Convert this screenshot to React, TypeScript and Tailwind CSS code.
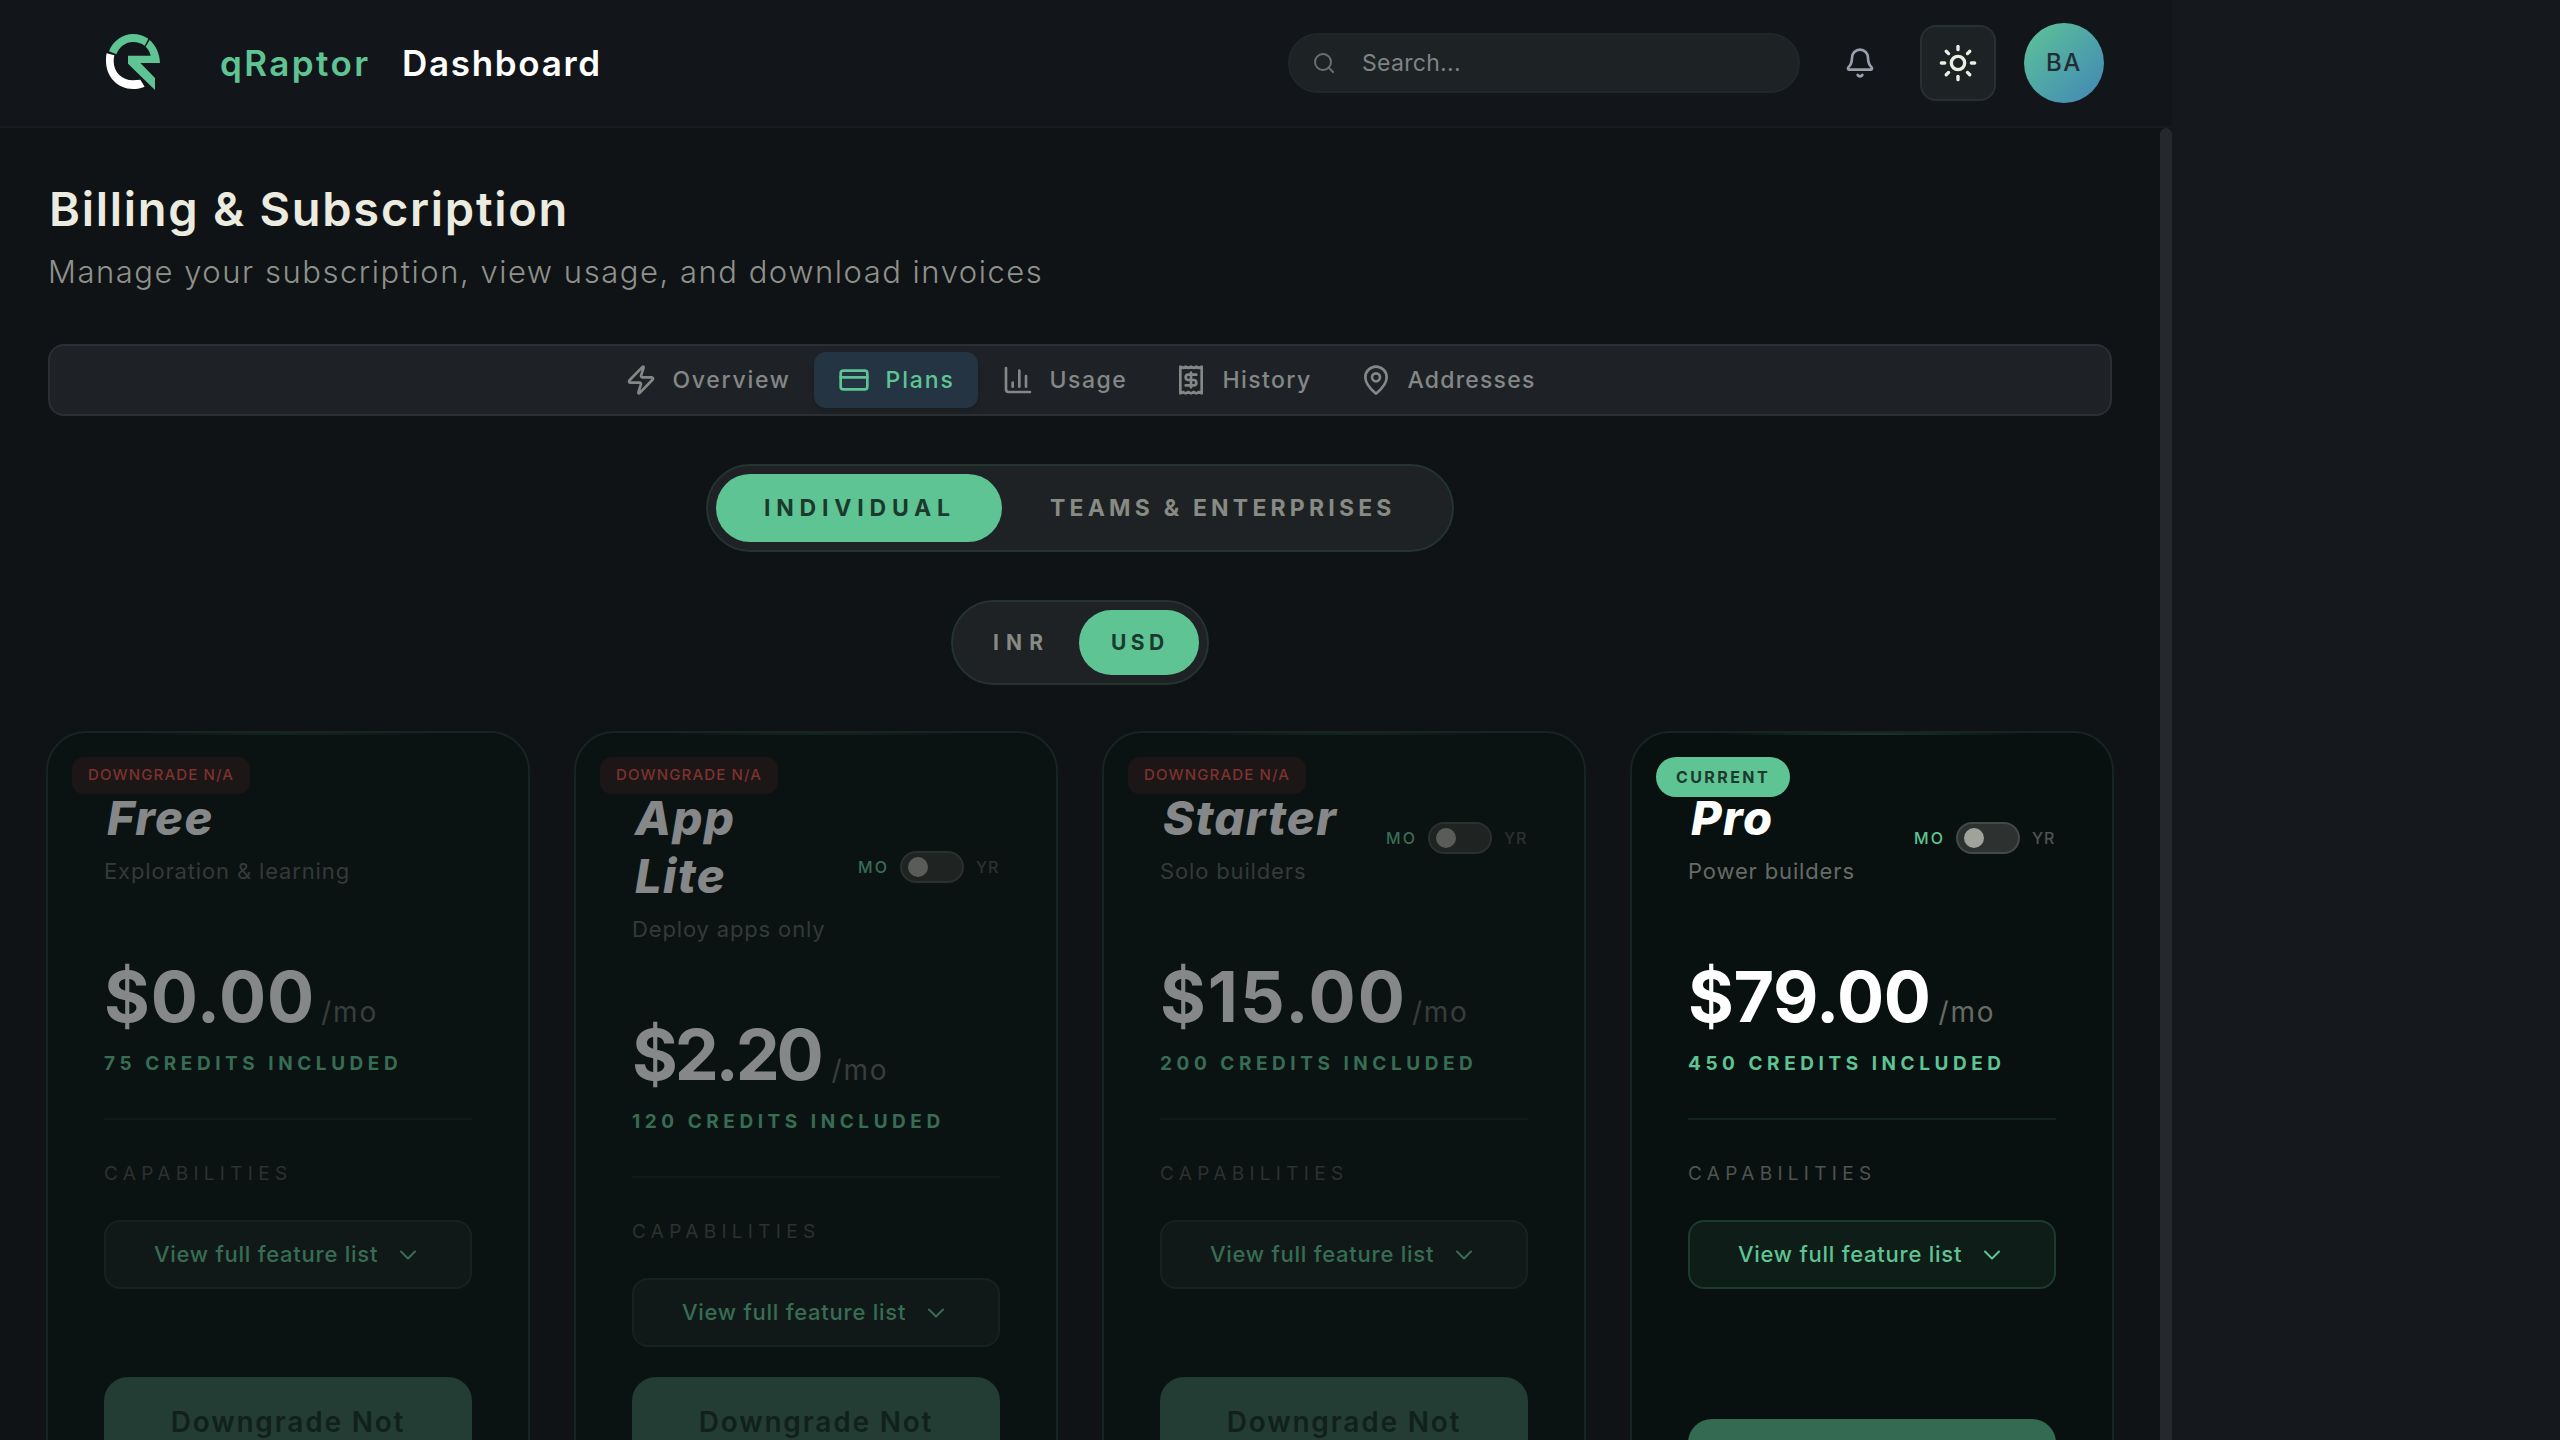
import React, { useState } from 'react';
import { clsx } from 'clsx';
import { Bell, ChartColumn, ChevronDown, CreditCard, MapPin, Receipt, Search, Sun, Zap } from 'lucide-react';

const tabs = [
  { id: 'overview', label: 'Overview', icon: Zap, className: 'w-[213px] tracking-[1.7px]' },
  { id: 'plans', label: 'Plans', icon: CreditCard, className: 'w-[164px] tracking-[1.9px]' },
  { id: 'usage', label: 'Usage', icon: ChartColumn, className: 'w-[173px] tracking-[1.5px]' },
  { id: 'history', label: 'History', icon: Receipt, className: 'w-[185px] tracking-[1.4px]' },
  { id: 'addresses', label: 'Addresses', icon: MapPin, className: 'w-[224px] tracking-[1.2px]' },
];

interface Plan {
  name: string;
  tagline: string;
  price: string;
  credits: number;
  action: string;
  hasToggle: boolean;
  current?: boolean;
  priceSpacing: string;
}

const plans: Plan[] = [
  { name: 'Free', tagline: 'Exploration & learning', price: '$0.00', credits: 75, action: 'Downgrade Not Available', hasToggle: false, priceSpacing: 'tracking-[0.9px] mr-[-2px]' },
  { name: 'App\nLite', tagline: 'Deploy apps only', price: '$2.20', credits: 120, action: 'Downgrade Not Available', hasToggle: true, priceSpacing: 'tracking-[-3.2px] mr-[3px]' },
  { name: 'Starter', tagline: 'Solo builders', price: '$15.00', credits: 200, action: 'Downgrade Not Available', hasToggle: true, priceSpacing: 'tracking-[2px] mr-[-3px]' },
  { name: 'Pro', tagline: 'Power builders', price: '$79.00', credits: 450, action: 'Current Plan', hasToggle: true, current: true, priceSpacing: 'tracking-[-0.4px]' },
];

const Logo = () => (
  <svg viewBox="0 0 216 216" className="w-[72px] h-[72px]">
    <path fill="#5fc494" d="M33 73C45 41 74 21 105 21c17 0 33 5 46 14l-11 21c-10-7-22-11-35-11-22 0-41 14-50 37Z" />
    <path fill="#5fc494" d="M155 39c18 16 30 40 31 69h-59l44 45v36L90 110V86h68c-2-10-7-19-15-27Z" />
    <path fill="#fff" d="M26 79l23 6c-1 5-2 11-2 17 0 33 24 58 58 58l22-2 13 21c-11 5-22 7-35 7-46 0-81-37-81-84 0-8 0-16 2-23Z" />
  </svg>
);

const Header = () => (
  <header className="h-32 shrink-0 flex items-center pl-[98px] pr-[68px] bg-[#12161a] border-b-2 border-[#171b20]">
    <Logo />
    <div className="ml-[50px] flex items-center text-[35px] font-semibold leading-none">
      <span className="w-[182px] text-[#5fc494] tracking-[2.4px]">qRaptor</span>
      <span className="text-white tracking-[1.7px]">Dashboard</span>
    </div>
    <div className="ml-auto flex items-center">
      <div className="w-[512px] h-[60px] flex items-center gap-[26px] px-[22px] rounded-[30px] bg-[#1d2225] border-2 border-[#212629]">
        <Search size={24} strokeWidth={2} className="text-[#6a6e6f]" />
        <span className="text-[23px] text-[#7f8385] tracking-[0.3px]">Search...</span>
      </div>
      <button className="w-[60px] ml-[30px] mr-[30px] flex justify-center text-[#9b9fad]">
        <Bell size={32} strokeWidth={2} />
      </button>
      <button className="w-[76px] h-[76px] flex items-center justify-center rounded-2xl bg-[#1d2225] border-2 border-[#2a2f33] text-[#edeee2]">
        <Sun size={40} strokeWidth={2} />
      </button>
      <div className="w-20 h-20 ml-7 flex items-center justify-center rounded-full bg-linear-135 from-[#5fc494] to-[#4385b5] text-[24px] font-medium tracking-[1.5px] text-[#242c33]">
        BA
      </div>
    </div>
  </header>
);

const TabBar = () => {
  const [active, setActive] = useState('plans');

  return (
    <nav className="mt-12 h-[72px] shrink-0 flex items-center justify-center rounded-2xl bg-[#1e2226] border-2 border-[#2a2f33]">
      {tabs.map(({ id, label, icon: Icon, className }) => (
        <button
          key={id}
          onClick={() => setActive(id)}
          className={clsx(
            'h-14 flex items-center gap-4 pl-6 rounded-xl text-[23px] font-medium',
            className,
            active === id ? 'bg-[#243442] text-[#5fc494] shadow-md' : 'text-[#858787]'
          )}
        >
          <Icon size={32} strokeWidth={2} className="shrink-0" />
          {label}
        </button>
      ))}
    </nav>
  );
};

const AudienceToggle = () => (
  <div className="mt-12 w-[748px] h-[88px] shrink-0 self-center flex p-2 rounded-full bg-[#1e2225] border-2 border-[#24342f] text-[23px] font-bold">
    <button className="w-[286px] pl-12 text-left rounded-full bg-[#5fc494] text-[#1b3a2d] tracking-[5.8px]">INDIVIDUAL</button>
    <button className="pl-12 text-left text-[#888a84] tracking-[4.2px]">TEAMS &amp; ENTERPRISES</button>
  </div>
);

const CurrencyToggle = () => (
  <div className="mt-12 w-[258px] h-[85px] shrink-0 self-center flex p-2 rounded-full bg-[#1e2225] border-2 border-[#24342f] text-[21px] font-bold">
    <button className="w-[118px] pl-8 text-left text-[#888a84] tracking-[7.2px]">INR</button>
    <button className="w-[120px] pl-8 text-left rounded-full bg-[#5fc494] text-[#1b3a2d] tracking-[4.5px]">USD</button>
  </div>
);

const BillingSwitch = ({ current }: { current?: boolean }) => (
  <div className="flex items-center text-[16px] font-medium leading-none">
    <span className={clsx('w-[42px] tracking-[2.2px]', current ? 'text-[#5fc494]' : 'text-[#376d55]')}>MO</span>
    <span className={clsx('w-16 h-8 flex items-center px-1.5 rounded-full border-2', current ? 'bg-[#2d3231] border-[#444947]' : 'bg-[#1f2423] border-[#2b302f]')}>
      <span className={clsx('w-5 h-5 rounded-full', current ? 'bg-[#a0a39a]' : 'bg-[#5a5c5a]')} />
    </span>
    <span className={clsx('w-9 pl-3 tracking-[0.9px]', current ? 'text-[#4f5450]' : 'text-[#2c3131]')}>YR</span>
  </div>
);

const PlanCard = ({ plan }: { plan: Plan }) => {
  const { current } = plan;

  return (
    <div className={clsx('relative w-[484px] h-[836px] shrink-0 flex flex-col p-14 rounded-[40px] border-2 border-[#172421]', current ? 'bg-[#091110]' : 'bg-[#0b1312]')}>
      {/* Top glow */}
      <div className={clsx('absolute top-0 left-20 right-20 h-0.5 bg-linear-to-r from-transparent to-transparent', current ? 'via-[#1a3429]' : 'via-[#15231e]')} />

      {current ? (
        <div className="absolute top-6 left-6 w-[134px] h-10 pl-5 flex items-center rounded-full bg-[#5fc494] text-[16px] font-bold tracking-[2.4px] text-[#1b3a2d]">
          CURRENT
        </div>
      ) : (
        <div className="absolute top-6 left-6 w-[178px] h-[37px] pl-4 flex items-center rounded-xl bg-[#1c1716] text-[15px] font-medium tracking-[1.15px] text-[#7d3230] whitespace-nowrap">
          DOWNGRADE N/A
        </div>
      )}

      <div className="flex items-center justify-between">
        <div>
          <h3 className={clsx('pl-[3px] text-[47px] leading-[58px] font-extrabold italic tracking-[1.4px] whitespace-pre-line', current ? 'text-white' : 'text-[#868789]')}>
            {plan.name}
          </h3>
          <p className={clsx('mt-2 text-[22px] leading-8 tracking-[0.85px]', current ? 'text-[#666b65]' : 'text-[#333a39]')}>{plan.tagline}</p>
        </div>
        {plan.hasToggle && <BillingSwitch current={current} />}
      </div>

      <div className="mt-[74px] h-[72px] flex items-baseline gap-2">
        <span className={clsx('text-[70px] leading-[72px] font-bold', plan.priceSpacing, current ? 'text-white' : 'text-[#868789]')}>{plan.price}</span>
        <span className={clsx('text-[28px] tracking-[1.8px]', current ? 'text-[#666b65]' : 'text-[#383d3d]')}>/mo</span>
      </div>
      <p className={clsx('mt-[17px] text-[19px] leading-7 font-bold tracking-[4.55px] whitespace-nowrap', current ? 'text-[#5fc494]' : 'text-[#376d55]')}>
        {plan.credits} CREDITS INCLUDED
      </p>

      <div className={clsx('mt-10 h-0.5 shrink-0', current ? 'bg-[#12241f]' : 'bg-[#111a19]')} />

      <p className={clsx('mt-10 text-[19px] leading-7 tracking-[5.3px]', current ? 'text-[#4f5450]' : 'text-[#2c3131]')}>CAPABILITIES</p>
      <button
        className={clsx(
          'mt-8 h-[69px] shrink-0 flex items-center justify-center rounded-2xl border-2 text-[22px] font-medium tracking-[0.75px]',
          current ? 'bg-[#0f1d19] border-[#1c3a2e] text-[#5fc494]' : 'bg-[#111918] border-[#152320] text-[#376d55]'
        )}
      >
        View full feature list
        <ChevronDown size={28} strokeWidth={1.75} className="ml-4" />
      </button>

      <button
        className={clsx(
          'mt-auto px-12 py-6 rounded-3xl text-[28px] leading-[42px] font-semibold tracking-[1.8px]',
          current ? 'bg-[#336a51] text-[#12201c]' : 'bg-[#233d34] text-[#12201c]'
        )}
      >
        {plan.action}
      </button>
    </div>
  );
};

export default function App() {
  return (
    <div className="h-[1440px] overflow-hidden bg-[#15191d] font-['Inter',sans-serif]">
      <div className="w-[2172px] h-full flex flex-col">
        <Header />
        <div className="flex-1 min-h-0 flex bg-[#0f1316]">
          <main className="w-[2160px] flex flex-col px-12 pt-[52px] overflow-hidden">
            <h1 className="pl-px text-[47px] leading-[58px] font-semibold tracking-[1.73px] text-[#ebebe0]">Billing &amp; Subscription</h1>
            <p className="mt-[11px] mb-px text-[31px] leading-[46px] font-light tracking-[1.52px] text-[#8f918b]">
              Manage your subscription, view usage, and download invoices
            </p>
            <TabBar />
            <AudienceToggle />
            <CurrencyToggle />
            <div className="mt-[46px] -ml-0.5 flex gap-11">
              {plans.map((plan) => (
                <PlanCard key={plan.name} plan={plan} />
              ))}
            </div>
          </main>
          {/* Scrollbar thumb */}
          <div className="w-3 rounded-t-full bg-[#26292b]" />
        </div>
      </div>
    </div>
  );
}
